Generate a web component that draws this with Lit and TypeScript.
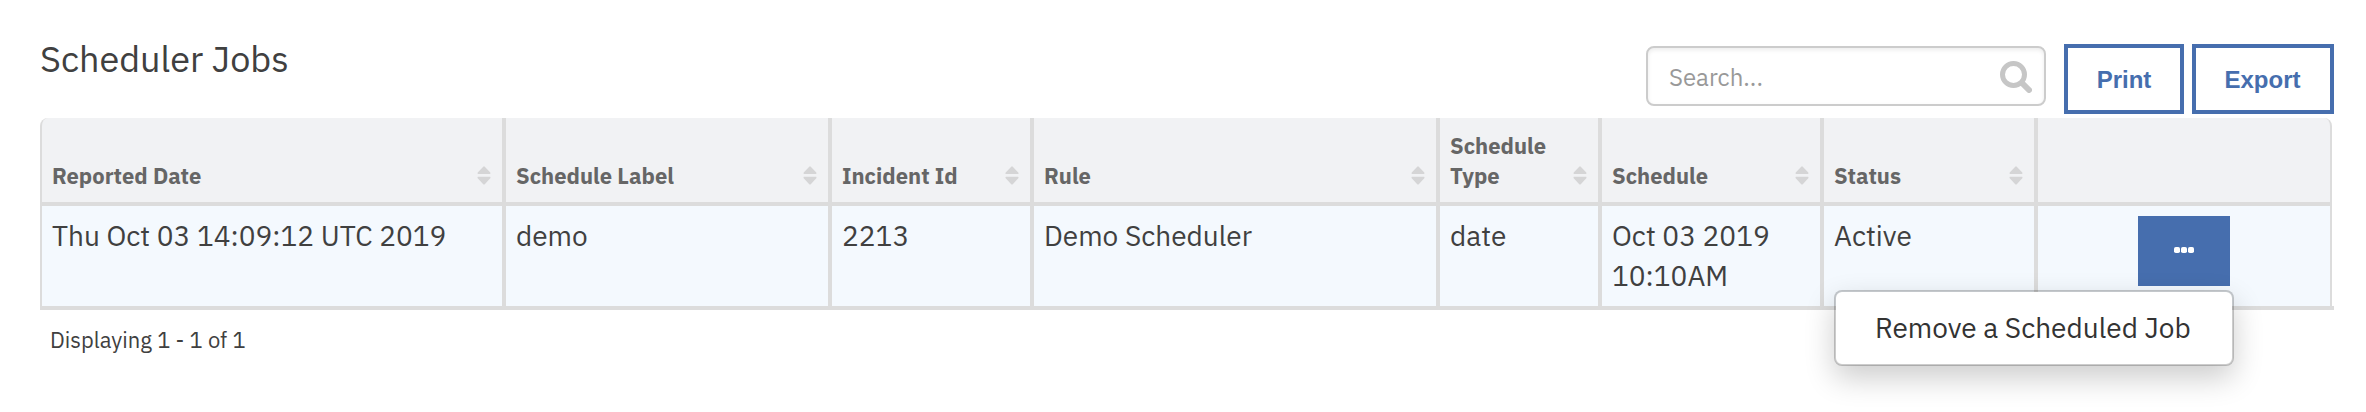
import { LitElement, html, css, svg, nothing } from "lit";
import { customElement, property } from "lit/decorators.js";

interface Column {
  key: string;
  label: string;
  sortable: boolean;
}

const COLUMNS: Column[] = [
  { key: "reported", label: "Reported Date", sortable: true },
  { key: "label", label: "Schedule Label", sortable: true },
  { key: "incident", label: "Incident Id", sortable: true },
  { key: "rule", label: "Rule", sortable: true },
  { key: "type", label: "Schedule Type", sortable: true },
  { key: "schedule", label: "Schedule", sortable: true },
  { key: "status", label: "Status", sortable: true },
  { key: "actions", label: "", sortable: false },
];

const JOBS: Record<string, string>[] = [
  {
    reported: "Thu Oct 03 14:09:12 UTC 2019",
    label: "demo",
    incident: "2213",
    rule: "Demo Scheduler",
    type: "date",
    schedule: "Oct 03 2019 10:10AM",
    status: "Active",
  },
];

@customElement("sort-icon")
export class SortIcon extends LitElement {
  static styles = css`
    :host { display: block; flex: none; width: 14px; height: 19px; }
    svg { display: block; }
  `;
  render() {
    return html`<svg width="14" height="19" viewBox="0 0 14 19" fill="#d5d5d6">
      ${svg`<path d="M7 0.3Q7.5 0.3 8 0.9L13.3 6.6Q14 8 12.8 8H1.2Q0 8 0.7 6.6L6 0.9Q6.5 0.3 7 0.3Z"/>
      <path d="M7 18.5Q7.500 18.500 8 17.900L13.300 12.200Q14 10.800 12.800 10.800H1.200Q0 10.800 0.700 12.200L6 17.900Q6.500 18.500 7 18.500Z"/>`}
    </svg>`;
  }
}

@customElement("action-menu")
export class ActionMenu extends LitElement {
  @property({ type: Array }) items: string[] = [];
  static styles = css`
    :host { display: block; position: relative; width: 92px; height: 70px; }
    .trigger {
      display: flex; align-items: center; justify-content: center; gap: 1.2px;
      width: 92px; height: 70px; padding: 0 0 2px; box-sizing: border-box;
      border: 0; background: #466eae;
    }
    .dot { width: 5.8px; height: 5.8px; border-radius: 1.8px; background: #fff; }
    .menu {
      position: absolute; z-index: 2; top: 74px; right: -4px;
      width: 400px; box-sizing: border-box; margin: 0; padding: 16px 0;
      list-style: none; background: #fff; background-clip: padding-box;
      border: 2px solid rgba(0, 0, 0, 0.2); border-radius: 8px;
      box-shadow: 0 12px 30px rgba(0, 0, 0, 0.2);
    }
    .item { padding: 0 39px; line-height: 40px; color: #333; white-space: nowrap; }
  `;
  render() {
    return html`
      <button class="trigger" aria-label="Actions">
        <span class="dot"></span><span class="dot"></span><span class="dot"></span>
      </button>
      <ul class="menu">
        ${this.items.map((item) => html`<li class="item">${item}</li>`)}
      </ul>
    `;
  }
}

@customElement("app-root")
export class AppRoot extends LitElement {
  static styles = css`
    :host {
      display: block; box-sizing: border-box; height: 412px; overflow: hidden;
      padding: 0 32px 0 40px; background: #fff; color: #404040;
      font-family: "IBM Plex Sans", Roboto, "Liberation Sans", sans-serif;
      font-size: 28px; line-height: 40px;
    }
    .top { display: flex; align-items: flex-start; height: 118px; padding-top: 44px; box-sizing: border-box; }
    .title { flex: 1; margin: -10px 0 0; font-size: 36px; font-weight: 400; line-height: 50px; }
    .search {
      display: flex; align-items: center; justify-content: space-between;
      box-sizing: border-box; width: 400px; height: 60px; margin: 2px 18px 0 0;
      padding: 0 12px 0 21px; border: 2px solid #ccc; border-radius: 8px;
      box-shadow: inset 0 2px 4px rgba(0, 0, 0, 0.08);
      color: #999; font-size: 24px; line-height: 34px;
    }
    .hint { padding-top: 2px; }
    .btn {
      box-sizing: border-box; height: 70px; padding: 2px 0 0; border: 4px solid #466eae;
      background: #fff; color: #466eae; font: 700 24px/60px "Liberation Sans", sans-serif;
    }
    .print { width: 120px; margin-right: 8px; }
    .export { width: 142px; padding-right: 1px; }
    .table { width: 2294px; border-bottom: 4px solid #dcdcdc; }
    .grid {
      display: grid; grid-template-columns: 464px 326px 202px 406px 162px 222px 214px 292px;
      width: 2292px; box-sizing: border-box; border: 0 solid #dcdcdc; border-width: 0 2px;
      border-radius: 8px 8px 0 0; background: #f1f2f4;
    }
    .th, .td { box-sizing: border-box; border-right: 4px solid #dcdcdc; padding: 10px; }
    .grid .last { border-right: 0; }
    .th {
      display: flex; align-items: flex-end; justify-content: space-between; height: 88px;
      border-bottom: 4px solid #dcdcdc; padding: 0 11px 11px 10px;
      color: #666; font-size: 22px; font-weight: 700; line-height: 30px;
    }
    .name { flex: 0 1 auto; }
    .narrow { width: 110px; }
    sort-icon { margin-bottom: 6px; }
    .td { height: 100px; background: #f4f9fe; }
    .actions { display: flex; justify-content: center; }
    .count { padding: 15px 10px; font-size: 22px; line-height: 30px; }
  `;

  private renderCell(job: Record<string, string>, col: Column) {
    if (col.key === "actions") {
      return html`<div class="td actions last">
        <action-menu .items=${["Remove a Scheduled Job"]}></action-menu>
      </div>`;
    }
    return html`<div class="td">${job[col.key]}</div>`;
  }

  render() {
    return html`
      <header class="top">
        <h1 class="title">Scheduler Jobs</h1>
        <div class="search">
          <span class="hint">Search...</span>
          <svg width="34" height="34" viewBox="0 0 34 34" fill="none" stroke="#c6c6c6">
            <circle cx="15.500" cy="15.500" r="11" stroke-width="5"></circle>
            <path d="M24 24L31 31" stroke-width="6" stroke-linecap="round"></path>
          </svg>
        </div>
        <button class="btn print">Print</button>
        <button class="btn export">Export</button>
      </header>
      <section class="table">
        <div class="grid">
          ${COLUMNS.map(
            (col) => html`<div class="th ${col.sortable ? "" : "last"}">
              <span class="name ${col.key === "type" ? "narrow" : ""}">${col.label}</span>
              ${col.sortable ? html`<sort-icon></sort-icon>` : nothing}
            </div>`
          )}
          ${JOBS.map((job) => COLUMNS.map((col) => this.renderCell(job, col)))}
        </div>
      </section>
      <footer class="count">Displaying 1 - 1 of 1</footer>
    `;
  }
}
